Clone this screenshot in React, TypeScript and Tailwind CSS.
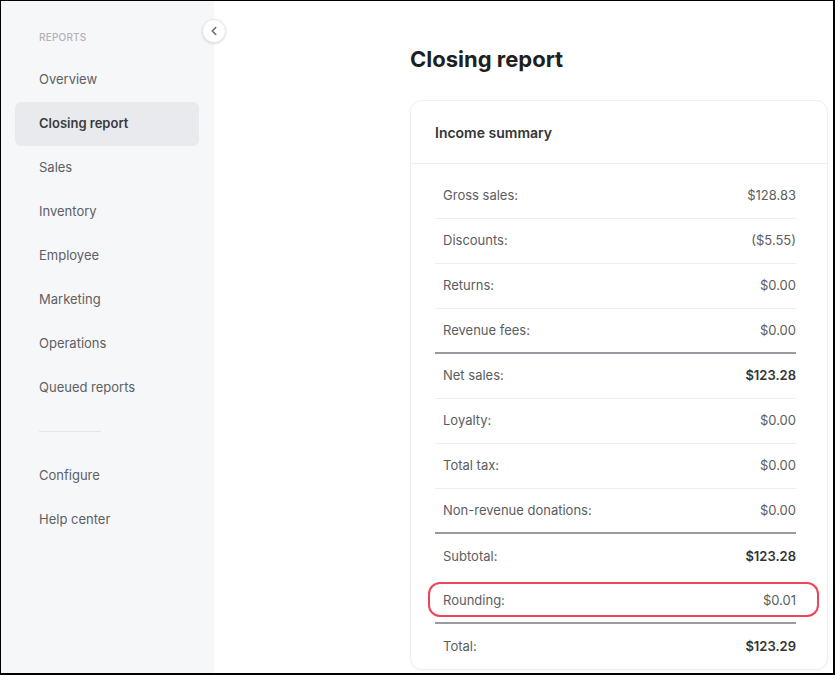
import { ChevronLeft } from 'lucide-react';

const navItems = [
  'Overview',
  'Closing report',
  'Sales',
  'Inventory',
  'Employee',
  'Marketing',
  'Operations',
  'Queued reports',
];

interface Row {
  label: string;
  value: string;
  bold?: boolean;
  divider?: 'thin' | 'thick' | 'none';
  highlight?: boolean;
}

const rows: Row[] = [
  { label: 'Gross sales:', value: '$128.83', divider: 'thin' },
  { label: 'Discounts:', value: '($5.55)', divider: 'thin' },
  { label: 'Returns:', value: '$0.00', divider: 'thin' },
  { label: 'Revenue fees:', value: '$0.00', divider: 'thick' },
  { label: 'Net sales:', value: '$123.28', bold: true, divider: 'thin' },
  { label: 'Loyalty:', value: '$0.00', divider: 'thin' },
  { label: 'Total tax:', value: '$0.00', divider: 'thin' },
  { label: 'Non-revenue donations:', value: '$0.00', divider: 'thick' },
  { label: 'Subtotal:', value: '$123.28', bold: true, divider: 'none' },
  { label: 'Rounding:', value: '$0.01', divider: 'thick', highlight: true },
  { label: 'Total:', value: '$123.29', bold: true, divider: 'none' },
];

export default function App() {
  return (
    <div className="h-[675px] w-[835px] overflow-hidden border-t border-l border-r-2 border-b-2 border-black bg-white font-['Inter',sans-serif]">
      <div className="flex h-full">
        {/* sidebar */}
        <aside className="relative h-full w-[213px] shrink-0 bg-[#f6f7f9]">
          <button className="absolute -right-[12px] top-[18px] flex h-[24px] w-[24px] items-center justify-center rounded-full border border-[#e6e7ea] bg-white shadow-sm">
            <ChevronLeft className="h-[14px] w-[14px] text-[#666]" strokeWidth={2.5} />
          </button>
          <div className="px-[14px] pt-[29px]">
            <div className="pl-[24px] text-[10px] font-medium uppercase tracking-[0.02em] text-[#b0b2b6]">
              Reports
            </div>
            <nav className="mt-[13px] flex flex-col">
              {navItems.map((item) => (
                <div
                  key={item}
                  className={
                    item === 'Closing report'
                      ? 'flex h-[44px] w-[184px] items-center rounded-md bg-[#e8eaee] pl-[24px] text-[13px] font-semibold text-[#3a3b3d]'
                      : 'flex h-[44px] w-[184px] items-center pl-[24px] text-[13px] text-[#5e6064]'
                  }
                >
                  {item}
                </div>
              ))}
            </nav>
            <div className="ml-[24px] mt-[21px] h-px w-[62px] bg-[#e4e5e8]" />
            <div className="mt-[22px] flex flex-col">
              <div className="flex h-[44px] items-center pl-[24px] text-[13px] text-[#5e6064]">Configure</div>
              <div className="flex h-[44px] items-center pl-[24px] text-[13px] text-[#5e6064]">Help center</div>
            </div>
          </div>
        </aside>

        {/* main */}
        <main className="flex-1 pl-[196px] pt-[43px]">
          <h1 className="text-[22px] font-bold leading-[30px] text-[#1e1f21]">Closing report</h1>
          <div className="mt-[26px] w-[418px] rounded-xl border border-[#eeeff1] bg-white shadow-[0_1px_3px_rgba(0,0,0,0.04)]">
            <div className="flex h-[63px] items-center border-b border-[#eeeff1] pl-[24px] text-[14px] font-semibold text-[#333436]">
              Income summary
            </div>
            <div className="pl-[24px] pr-[31px] pt-[10px]">
              {rows.map((row) => (
                <div
                  key={row.label}
                  className={
                    row.divider === 'thick'
                      ? 'relative flex h-[45px] items-center justify-between border-b-2 border-[#9a9b9e] pl-[8px] text-[13px]'
                      : row.divider === 'thin'
                      ? 'relative flex h-[45px] items-center justify-between border-b border-[#efeff1] pl-[8px] text-[13px]'
                      : 'relative flex h-[45px] items-center justify-between pl-[8px] text-[13px]'
                  }
                >
                  <span className="text-[#5b5d61]">{row.label}</span>
                  <span className={row.bold ? 'font-semibold text-[#333436]' : 'text-[#5b5d61]'}>
                    {row.value}
                  </span>
                  {row.highlight && (
                    <div className="absolute -left-[7px] -right-[23px] top-[3px] bottom-[5px] rounded-[12px] border-2 border-[#f0435a]" />
                  )}
                </div>
              ))}
            </div>
          </div>
        </main>
      </div>
    </div>
  );
}
